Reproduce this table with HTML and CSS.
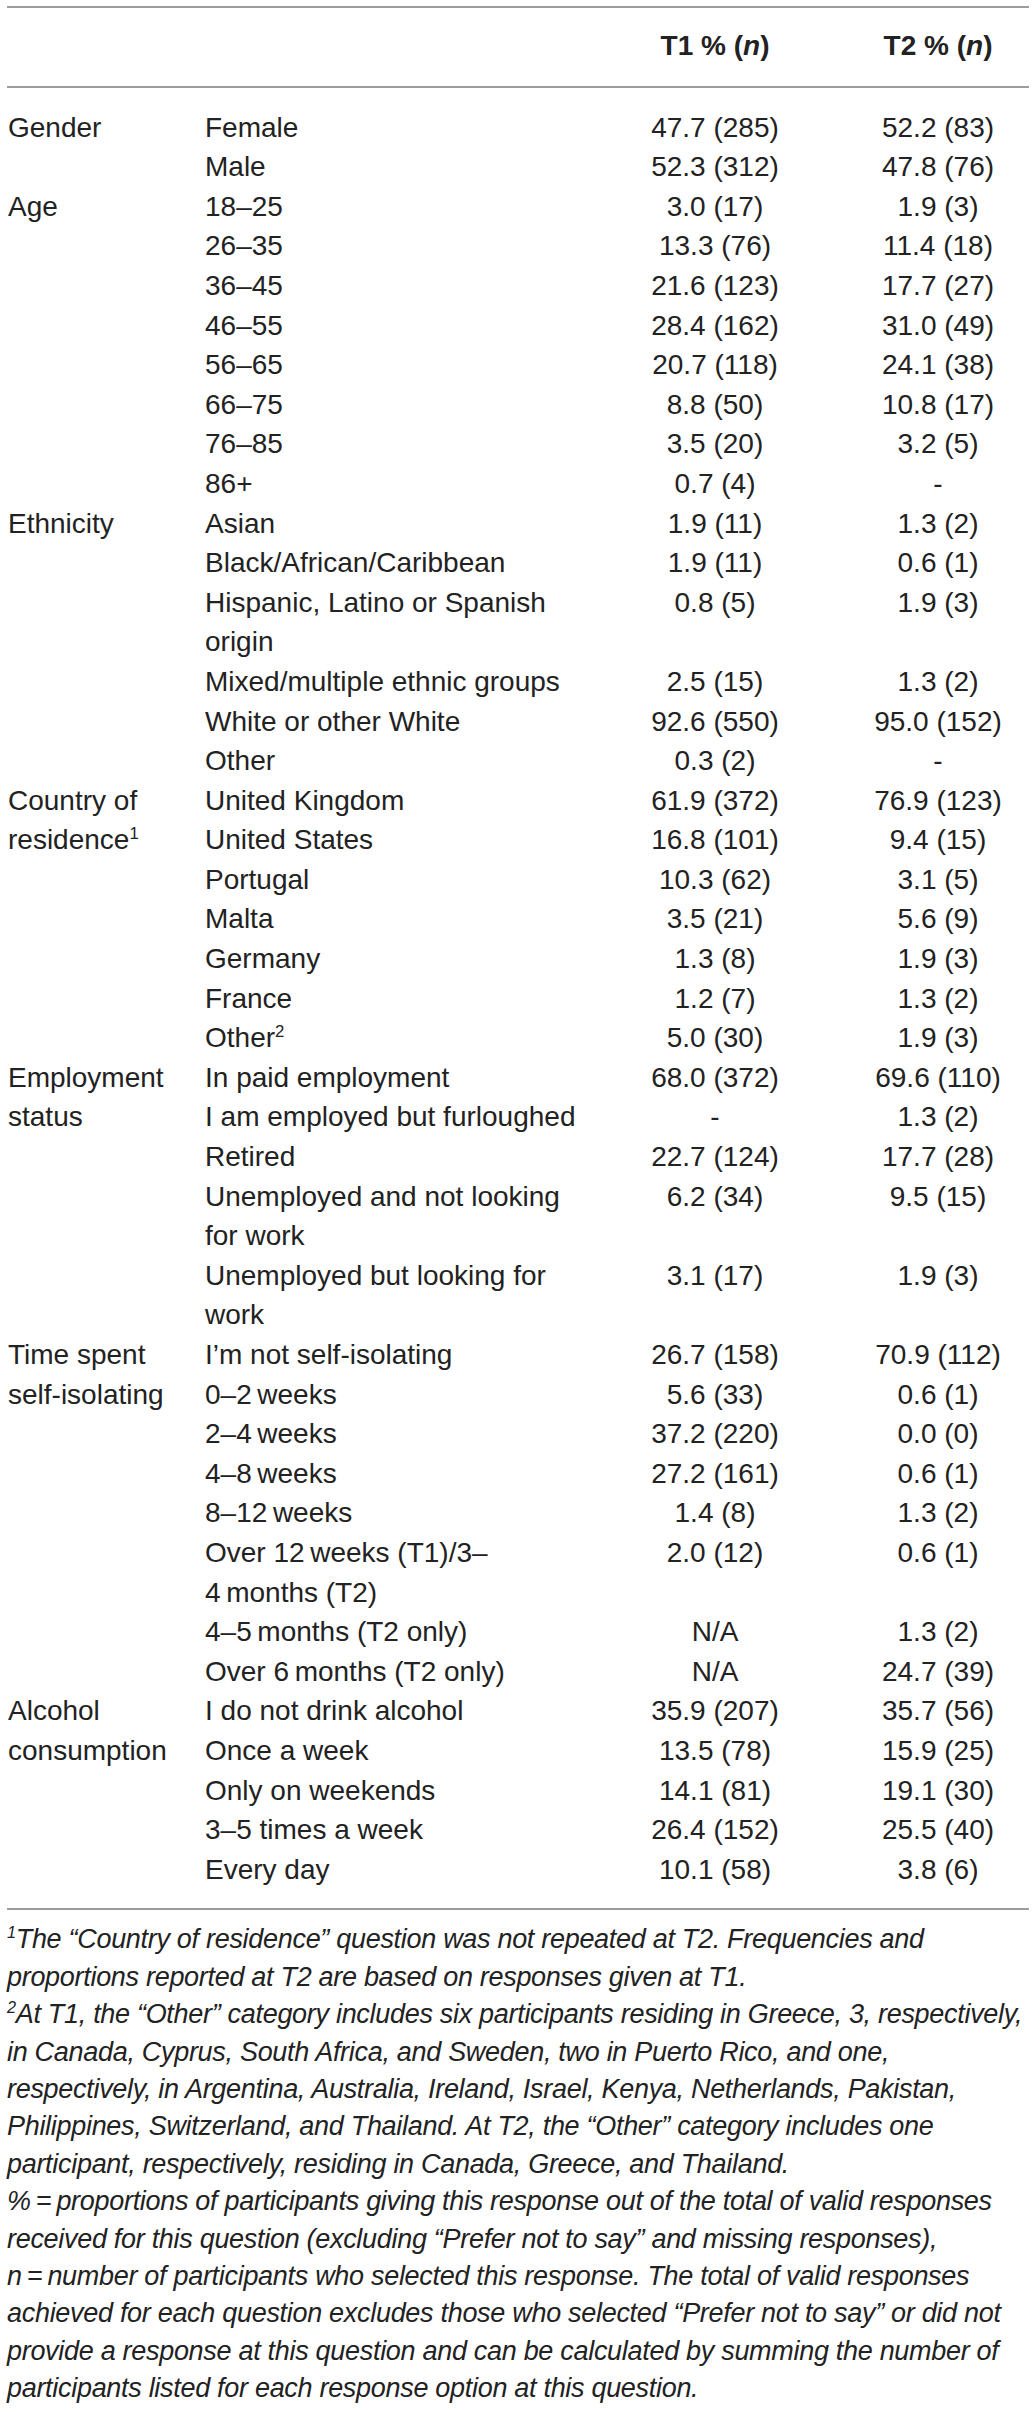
FILE: index.html
```html
<!DOCTYPE html>
<html lang="en">
<head>
<meta charset="utf-8">
<title>Participant characteristics</title>
<link rel="stylesheet" href="styles.css">
</head>
<body>
<div class="page">
<table class="data">
  <colgroup>
    <col class="c1"><col class="c2"><col class="c3"><col class="c4">
  </colgroup>
  <thead>
    <tr>
      <th></th><th></th>
      <th class="num">T1 % (<i>n</i>)</th>
      <th class="num">T2 % (<i>n</i>)</th>
    </tr>
  </thead>
  <tbody>
    <tr><td class="grp" rowspan="2">Gender</td><td>Female</td><td class="num">47.7 (285)</td><td class="num">52.2 (83)</td></tr>
    <tr><td>Male</td><td class="num">52.3 (312)</td><td class="num">47.8 (76)</td></tr>

    <tr><td class="grp" rowspan="8">Age</td><td>18–25</td><td class="num">3.0 (17)</td><td class="num">1.9 (3)</td></tr>
    <tr><td>26–35</td><td class="num">13.3 (76)</td><td class="num">11.4 (18)</td></tr>
    <tr><td>36–45</td><td class="num">21.6 (123)</td><td class="num">17.7 (27)</td></tr>
    <tr><td>46–55</td><td class="num">28.4 (162)</td><td class="num">31.0 (49)</td></tr>
    <tr><td>56–65</td><td class="num">20.7 (118)</td><td class="num">24.1 (38)</td></tr>
    <tr><td>66–75</td><td class="num">8.8 (50)</td><td class="num">10.8 (17)</td></tr>
    <tr><td>76–85</td><td class="num">3.5 (20)</td><td class="num">3.2 (5)</td></tr>
    <tr><td>86+</td><td class="num">0.7 (4)</td><td class="num">-</td></tr>

    <tr><td class="grp" rowspan="6">Ethnicity</td><td>Asian</td><td class="num">1.9 (11)</td><td class="num">1.3 (2)</td></tr>
    <tr><td>Black/African/Caribbean</td><td class="num">1.9 (11)</td><td class="num">0.6 (1)</td></tr>
    <tr><td>Hispanic, Latino or Spanish<br>origin</td><td class="num">0.8 (5)</td><td class="num">1.9 (3)</td></tr>
    <tr><td>Mixed/multiple ethnic groups</td><td class="num">2.5 (15)</td><td class="num">1.3 (2)</td></tr>
    <tr><td>White or other White</td><td class="num">92.6 (550)</td><td class="num">95.0 (152)</td></tr>
    <tr><td>Other</td><td class="num">0.3 (2)</td><td class="num">-</td></tr>

    <tr><td class="grp" rowspan="7">Country of<br>residence<sup>1</sup></td><td>United Kingdom</td><td class="num">61.9 (372)</td><td class="num">76.9 (123)</td></tr>
    <tr><td>United States</td><td class="num">16.8 (101)</td><td class="num">9.4 (15)</td></tr>
    <tr><td>Portugal</td><td class="num">10.3 (62)</td><td class="num">3.1 (5)</td></tr>
    <tr><td>Malta</td><td class="num">3.5 (21)</td><td class="num">5.6 (9)</td></tr>
    <tr><td>Germany</td><td class="num">1.3 (8)</td><td class="num">1.9 (3)</td></tr>
    <tr><td>France</td><td class="num">1.2 (7)</td><td class="num">1.3 (2)</td></tr>
    <tr><td>Other<sup>2</sup></td><td class="num">5.0 (30)</td><td class="num">1.9 (3)</td></tr>

    <tr><td class="grp" rowspan="5">Employment<br>status</td><td>In paid employment</td><td class="num">68.0 (372)</td><td class="num">69.6 (110)</td></tr>
    <tr><td>I am employed but furloughed</td><td class="num">-</td><td class="num">1.3 (2)</td></tr>
    <tr><td>Retired</td><td class="num">22.7 (124)</td><td class="num">17.7 (28)</td></tr>
    <tr><td>Unemployed and not looking<br>for work</td><td class="num">6.2 (34)</td><td class="num">9.5 (15)</td></tr>
    <tr><td>Unemployed but looking for<br>work</td><td class="num">3.1 (17)</td><td class="num">1.9 (3)</td></tr>

    <tr><td class="grp" rowspan="8">Time spent<br>self-isolating</td><td>I’m not self-isolating</td><td class="num">26.7 (158)</td><td class="num">70.9 (112)</td></tr>
    <tr><td>0–2&#8201;weeks</td><td class="num">5.6 (33)</td><td class="num">0.6 (1)</td></tr>
    <tr><td>2–4&#8201;weeks</td><td class="num">37.2 (220)</td><td class="num">0.0 (0)</td></tr>
    <tr><td>4–8&#8201;weeks</td><td class="num">27.2 (161)</td><td class="num">0.6 (1)</td></tr>
    <tr><td>8–12&#8201;weeks</td><td class="num">1.4 (8)</td><td class="num">1.3 (2)</td></tr>
    <tr><td>Over 12&#8201;weeks (T1)/3–<br>4&#8201;months (T2)</td><td class="num">2.0 (12)</td><td class="num">0.6 (1)</td></tr>
    <tr><td>4–5&#8201;months (T2 only)</td><td class="num">N/A</td><td class="num">1.3 (2)</td></tr>
    <tr><td>Over 6&#8201;months (T2 only)</td><td class="num">N/A</td><td class="num">24.7 (39)</td></tr>

    <tr><td class="grp" rowspan="5">Alcohol<br>consumption</td><td>I do not drink alcohol</td><td class="num">35.9 (207)</td><td class="num">35.7 (56)</td></tr>
    <tr><td>Once a week</td><td class="num">13.5 (78)</td><td class="num">15.9 (25)</td></tr>
    <tr><td>Only on weekends</td><td class="num">14.1 (81)</td><td class="num">19.1 (30)</td></tr>
    <tr><td>3–5 times a week</td><td class="num">26.4 (152)</td><td class="num">25.5 (40)</td></tr>
    <tr><td>Every day</td><td class="num">10.1 (58)</td><td class="num">3.8 (6)</td></tr>
  </tbody>
</table>

<div class="notes">
  <p><sup>1</sup>The “Country of residence” question was not repeated at T2. Frequencies and<br>proportions reported at T2 are based on responses given at T1.</p>
  <p><sup>2</sup>At T1, the “Other” category includes six participants residing in Greece, 3, respectively,<br>in Canada, Cyprus, South Africa, and Sweden, two in Puerto Rico, and one,<br>respectively, in Argentina, Australia, Ireland, Israel, Kenya, Netherlands, Pakistan,<br>Philippines, Switzerland, and Thailand. At T2, the “Other” category includes one<br>participant, respectively, residing in Canada, Greece, and Thailand.</p>
  <p>%&#8201;=&#8201;proportions of participants giving this response out of the total of valid responses<br>received for this question (excluding “Prefer not to say” and missing responses),<br>n&#8201;=&#8201;number of participants who selected this response. The total of valid responses<br>achieved for each question excludes those who selected “Prefer not to say” or did not<br>provide a response at this question and can be calculated by summing the number of<br>participants listed for each response option at this question.</p>
</div>
</div>
</body>
</html>
```

FILE: styles.css
```css
html, body {
  margin: 0;
  padding: 0;
  background: #ffffff;
}

body {
  font-family: "Liberation Sans", Arial, Helvetica, sans-serif;
  font-size: 28px;
  line-height: 39.6px;
  color: #222222;
}

.page {
  padding: 6px 7px 0 7px;
  width: 1022px;
}

.data {
  width: 1022px;
  border-collapse: collapse;
  table-layout: fixed;
  border-top: 2px solid #9c9c9c;
  border-bottom: 2px solid #9c9c9c;
}

.c1 { width: 198px; }
.c2 { width: 378px; }
.c3 { width: 264px; }
.c4 { width: 182px; }

.data th,
.data td {
  padding: 0;
  vertical-align: top;
  text-align: left;
  font-weight: normal;
  white-space: nowrap;
}

.data thead th {
  padding: 18px 0 20px 0;
  font-weight: bold;
  border-bottom: 2px solid #9c9c9c;
}

.data th.num,
.data td.num {
  text-align: center;
}

.data td.grp {
  padding-left: 1px;
}

.data tbody tr:first-child td {
  padding-top: 20px;
}

.data tbody tr:last-child td {
  padding-bottom: 19px;
}

sup {
  font-size: 60%;
  line-height: 0;
  vertical-align: 0.6em;
}

.notes {
  font-style: italic;
  font-size: 27px;
  letter-spacing: -0.3px;
  padding-top: 11px;
}

.notes p {
  margin: 0;
  line-height: 37.4px;
  white-space: nowrap;
}
```
